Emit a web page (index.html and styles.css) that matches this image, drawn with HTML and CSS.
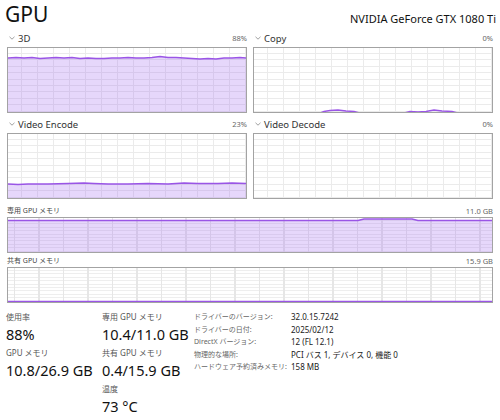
FILE: index.html
```html
<!DOCTYPE html>
<html lang="ja">
<head>
  <meta charset="UTF-8" />
  <title>GPU</title>
  <link rel="stylesheet" href="styles.css">
</head>
<body>
  <div class="page">
    <div class="header">
      <h1 class="title">GPU</h1>
      <div class="model">NVIDIA GeForce GTX 1080 Ti</div>
    </div>

    <div class="charts">
      <div class="chart">
        <div class="chart-label">
          <span class="name"><svg class="chev" viewBox="0 0 6 4"><path d="M0.5 0.8 L3 3.2 L5.5 0.8" /></svg>3D</span>
          <span class="pct">88%</span>
        </div>
        <div class="box grid-small">
          <svg viewBox="0 0 238 64" preserveAspectRatio="none">
            <polygon class="area" points="0,10 8,9.5 16,10 24,9.5 32,10.5 40,10 48,9.5 56,10 64,9.5 72,10.5 80,10 88,10.5 96,10.5 104,10 112,10 120,9.5 128,10 136,10 144,9.5 152,8.5 160,9.5 168,9.5 176,10 184,10.5 192,11 200,10.5 208,11 216,10 224,10 232,9.5 238,10 238,64 0,64" />
            <polyline class="line" points="0,10 8,9.5 16,10 24,9.5 32,10.5 40,10 48,9.5 56,10 64,9.5 72,10.5 80,10 88,10.5 96,10.5 104,10 112,10 120,9.5 128,10 136,10 144,9.5 152,8.5 160,9.5 168,9.5 176,10 184,10.5 192,11 200,10.5 208,11 216,10 224,10 232,9.5 238,10" />
          </svg>
        </div>
      </div>

      <div class="chart">
        <div class="chart-label">
          <span class="name"><svg class="chev" viewBox="0 0 6 4"><path d="M0.5 0.8 L3 3.2 L5.5 0.8" /></svg>Copy</span>
          <span class="pct">0%</span>
        </div>
        <div class="box grid-small">
          <svg viewBox="0 0 238 64" preserveAspectRatio="none">
            <polyline class="line" points="0,65 66,65 70,63.5 76,62.5 84,62 92,63 100,63.5 106,65 150,65 156,63.5 164,64 172,63.5 180,62 188,63 198,63.5 204,65 238,65" />
          </svg>
        </div>
      </div>

      <div class="chart">
        <div class="chart-label">
          <span class="name"><svg class="chev" viewBox="0 0 6 4"><path d="M0.5 0.8 L3 3.2 L5.5 0.8" /></svg>Video Encode</span>
          <span class="pct">23%</span>
        </div>
        <div class="box grid-small">
          <svg viewBox="0 0 238 64" preserveAspectRatio="none">
            <polygon class="area" points="0,50 10,50.5 20,50 40,50 60,49.5 76,49 86,49.5 100,50 120,50 140,49.5 160,50 176,49 190,49.5 210,49.5 224,49 238,49.5 238,64 0,64" />
            <polyline class="line" points="0,50 10,50.5 20,50 40,50 60,49.5 76,49 86,49.5 100,50 120,50 140,49.5 160,50 176,49 190,49.5 210,49.5 224,49 238,49.5" />
          </svg>
        </div>
      </div>

      <div class="chart">
        <div class="chart-label">
          <span class="name"><svg class="chev" viewBox="0 0 6 4"><path d="M0.5 0.8 L3 3.2 L5.5 0.8" /></svg>Video Decode</span>
          <span class="pct">0%</span>
        </div>
        <div class="box grid-small"></div>
      </div>
    </div>

    <div class="mem">
      <div class="mem-label">
        <span>専用 GPU メモリ</span>
        <span class="pct">11.0 GB</span>
      </div>
      <div class="box mem-box grid-wide">
        <svg viewBox="0 0 484 34" preserveAspectRatio="none">
          <polygon class="area" points="0,2.5 350,2.5 356,1 404,1 410,2.5 484,2.5 484,34 0,34" />
          <polyline class="line" points="0,2.5 350,2.5 356,1 404,1 410,2.5 484,2.5" />
        </svg>
      </div>
    </div>

    <div class="mem mem-shared">
      <div class="mem-label">
        <span>共有 GPU メモリ</span>
        <span class="pct">15.9 GB</span>
      </div>
      <div class="box mem-box grid-wide">
        <svg viewBox="0 0 484 34" preserveAspectRatio="none">
          <polyline class="line" points="0,33.5 484,33.5" />
        </svg>
      </div>
    </div>

    <div class="stats">
      <div class="stat-col">
        <div class="stat">
          <div class="stat-label">使用率</div>
          <div class="stat-value">88%</div>
        </div>
        <div class="stat">
          <div class="stat-label">GPU メモリ</div>
          <div class="stat-value">10.8/26.9 GB</div>
        </div>
      </div>
      <div class="stat-col stat-col-mid">
        <div class="stat">
          <div class="stat-label">専用 GPU メモリ</div>
          <div class="stat-value">10.4/11.0 GB</div>
        </div>
        <div class="stat">
          <div class="stat-label">共有 GPU メモリ</div>
          <div class="stat-value">0.4/15.9 GB</div>
        </div>
        <div class="stat">
          <div class="stat-label">温度</div>
          <div class="stat-value">73 °C</div>
        </div>
      </div>
      <table class="info">
        <tr><th>ドライバーのバージョン:</th><td>32.0.15.7242</td></tr>
        <tr><th>ドライバーの日付:</th><td>2025/02/12</td></tr>
        <tr><th>DirectX バージョン:</th><td>12 (FL 12.1)</td></tr>
        <tr><th>物理的な場所:</th><td>PCI バス 1, デバイス 0, 機能 0</td></tr>
        <tr><th>ハードウェア予約済みメモリ:</th><td>158 MB</td></tr>
      </table>
    </div>
  </div>
</body>
</html>
```

FILE: styles.css
```css
body { margin: 0; background: #fff; color: #1a1a1a; font-family: "Noto Sans", "Noto Sans CJK JP", sans-serif; }
.page { width: 500px; }

.header { height: 29px; display: flex; justify-content: space-between; align-items: flex-start; padding: 0 4px 0 5px; box-sizing: border-box; }
.title { margin: 4px 0 0; font-size: 21px; font-weight: normal; line-height: 21px; color: #111; }
.model { font-size: 11px; line-height: 14px; margin-top: 12px; color: #111; }

.charts { display: grid; grid-template-columns: 240px 240px; column-gap: 6px; row-gap: 2px; padding-left: 7px; }
.chart-label { height: 18px; display: flex; justify-content: space-between; align-items: center; }
.name { display: flex; align-items: center; font-size: 9.5px; color: #333; }
.chev { width: 6px; height: 4px; margin: 0 3px 0 2px; fill: none; stroke: #888; stroke-width: 0.8; }
.pct { font-size: 7.5px; color: #666; }

.box { position: relative; height: 66px; border: 1px solid #a3a3a3; box-sizing: border-box; overflow: hidden; }
.box svg { display: block; width: 100%; height: 100%; }
.grid-small {
  background-color: #fff;
  background-image:
    repeating-linear-gradient(to right, #ebebeb 0 1px, transparent 1px 16px),
    repeating-linear-gradient(to bottom, #ebebeb 0 1px, transparent 1px 6.4px);
  background-position: 13px 0, 0 5px;
}
.grid-wide {
  background-color: #fff;
  background-image:
    repeating-linear-gradient(to right, #e6e6e6 0 1px, transparent 1px 24.5px),
    repeating-linear-gradient(to bottom, #eeeeee 0 1px, transparent 1px 3.4px);
  background-position: 6px 0, 0 2px;
}
.area { fill: rgba(165, 110, 240, 0.28); }
.line { fill: none; stroke: #9a55e6; stroke-width: 1.4; vector-effect: non-scaling-stroke; }

.mem { padding: 4px 7px 0 7px; }
.mem-shared { padding-top: 0; }
.mem-label { height: 14px; display: flex; justify-content: space-between; align-items: flex-end; font-size: 7px; color: #444; line-height: 12px; }
.mem-box { height: 36px; }

.stats { display: flex; align-items: flex-start; padding: 8px 0 0 6px; }
.stat-col { width: 96px; flex: none; }
.stat-col-mid { width: 92px; }
.stat { margin-bottom: 2px; }
.stat-label { font-size: 8px; line-height: 12px; color: #555; white-space: nowrap; }
.stat-value { font-size: 14.5px; line-height: 22px; color: #111; white-space: nowrap; }

.info { border-collapse: collapse; }
.info th, .info td { padding: 0; line-height: 12.5px; height: 12.5px; text-align: left; white-space: nowrap; }
.info th { font-weight: normal; font-size: 7px; color: #666; width: 97px; }
.info td { font-size: 8px; color: #1a1a1a; }
```
